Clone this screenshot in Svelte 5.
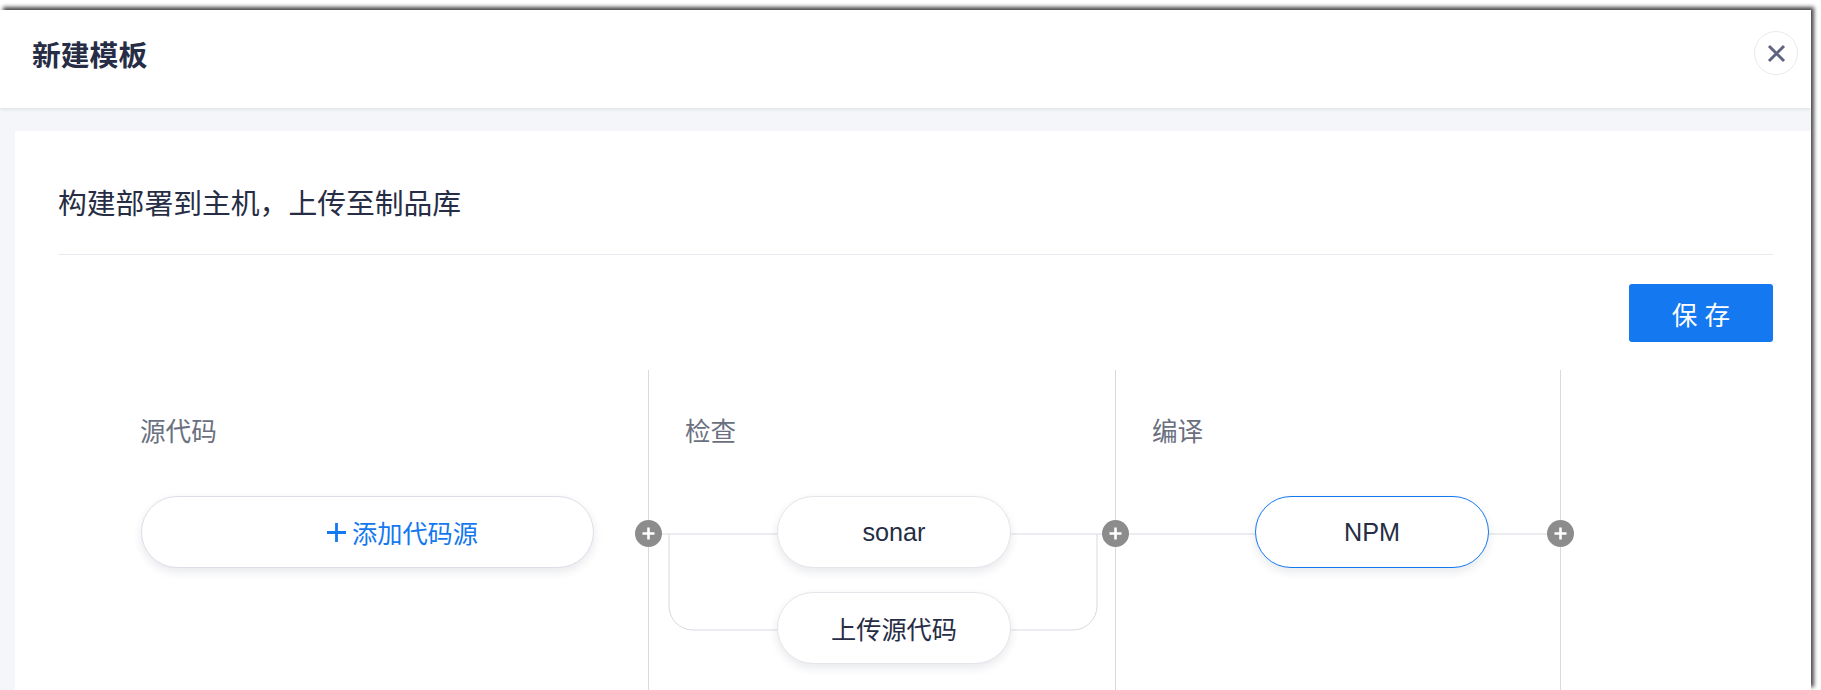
<!--
  New template page: header bar, pipeline card with stage columns and connectors.
-->
<script lang="ts">
	// Stage origin sits at page (58, 370); connector coordinates are relative to it.
	const TOP_Y = 164;
	const LOW_Y = 260;

	const links = [
		`M 590 ${TOP_Y} H 719`,
		`M 952 ${TOP_Y} H 1057`,
		`M 1057 ${TOP_Y} H 1197`,
		`M 1431 ${TOP_Y} H 1502`,
		`M 611 ${TOP_Y} V ${LOW_Y - 24} A 24 24 0 0 0 635 ${LOW_Y} H 719`,
		`M 1039 ${TOP_Y} V ${LOW_Y - 24} A 24 24 0 0 1 1015 ${LOW_Y} H 952`
	];
	const plusAt = [590, 1057, 1502];
</script>

<div class="window">
	<header class="topbar">
		<h1>新建模板</h1>
		<button class="close" aria-label="关闭">
			<svg width="19" height="19" viewBox="0 0 19 19">
				<path d="M2 2 L17 17 M17 2 L2 17" />
			</svg>
		</button>
	</header>

	<main class="page">
		<section class="card">
			<h2>构建部署到主机，上传至制品库</h2>
			<div class="toolbar">
				<button class="save">保 存</button>
			</div>

			<div class="stage">
				<div class="col col-source">
					<div class="label">源代码</div>
					<button class="pill pill-add">
						<svg width="19" height="19" viewBox="0 0 19 19">
							<path d="M9.5 0 V19 M0 9.5 H19" />
						</svg>
						<span>添加代码源</span>
					</button>
				</div>
				<div class="col col-check">
					<div class="label">检查</div>
					<div class="steps">
						<div class="pill">sonar</div>
						<div class="pill">上传源代码</div>
					</div>
				</div>
				<div class="col col-build">
					<div class="label">编译</div>
					<div class="steps">
						<div class="pill active">NPM</div>
					</div>
				</div>

				<svg class="links" width="1600" height="320">
					{#each links as d}
						<path {d} />
					{/each}
				</svg>
				{#each plusAt as x}
					<span class="plus" style="left: {x}px">
						<svg width="15" height="15" viewBox="0 0 15 15">
							<path d="M7.5 1.5 V13.5 M1.5 7.5 H13.5" />
						</svg>
					</span>
				{/each}
			</div>
		</section>
	</main>
</div>

<style>
	:global(body) {
		margin: 0;
		background: #fff;
		overflow: hidden;
	}

	.window {
		width: 1811px;
		height: 680px;
		margin-top: 10px;
		display: flex;
		flex-direction: column;
		background: #fff;
		box-shadow: 3px -3px 4px #4c4c4c;
		font-family: 'Liberation Sans', 'Noto Sans CJK SC', sans-serif;
		color: #262d45;
	}

	.topbar {
		flex: none;
		height: 98px;
		padding: 0 13px 12px 32px;
		box-sizing: border-box;
		display: flex;
		align-items: center;
		justify-content: space-between;
		background: #fff;
		box-shadow: 0 1px 4px rgba(0, 0, 0, 0.1);
		position: relative;
	}

	h1 {
		margin: 0;
		font-size: 28.8px;
		font-weight: 700;
	}

	.close {
		width: 44px;
		height: 44px;
		padding: 0;
		display: flex;
		align-items: center;
		justify-content: center;
		background: #fff;
		border: 1px solid #e8eaf0;
		border-radius: 50%;
	}

	.close path {
		fill: none;
		stroke: #5f6580;
		stroke-width: 3;
	}

	.page {
		flex: 1;
		min-height: 0;
		padding: 23px 0 0 15px;
		background: #f5f6fa;
	}

	.card {
		height: 100%;
		padding: 0 38px 0 43px;
		box-sizing: border-box;
		background: #fff;
		overflow: hidden;
	}

	h2 {
		margin: 0;
		height: 124px;
		line-height: 146px;
		box-sizing: border-box;
		font-size: 28.8px;
		font-weight: 400;
		border-bottom: 1px solid #e9eaf0;
	}

	.toolbar {
		display: flex;
		justify-content: flex-end;
		padding-top: 29px;
	}

	.save {
		width: 144px;
		height: 58px;
		padding: 0;
		border: 0;
		border-radius: 3px;
		background: #1478f0;
		color: #fff;
		font: inherit;
		font-size: 25.6px;
	}

	.stage {
		position: relative;
		display: flex;
		height: 320px;
		margin-top: 28px;
	}

	.col {
		flex: none;
		box-sizing: border-box;
		border-right: 1px solid #d8dae0;
	}

	.col-source {
		width: 591px;
		padding-left: 82px;
	}

	.col-check {
		width: 467px;
		padding-left: 36px;
	}

	.col-build {
		width: 445px;
		padding-left: 36px;
	}

	.label {
		height: 126px;
		line-height: 124px;
		font-size: 25.6px;
		color: #6a7080;
	}

	.steps {
		display: flex;
		flex-direction: column;
		gap: 24px;
		padding-left: 92px;
	}

	.col-build .steps {
		padding-left: 103px;
	}

	.pill {
		position: relative;
		z-index: 1;
		width: 234px;
		height: 72px;
		box-sizing: border-box;
		display: flex;
		align-items: center;
		justify-content: center;
		background: #fff;
		border: 1px solid #e4e5ea;
		border-radius: 36px;
		box-shadow: 0 4px 10px rgba(30, 40, 70, 0.1);
		font-size: 25.2px;
	}

	.pill.active {
		border-color: #1478f0;
	}

	.pill-add {
		width: 453px;
		margin-left: 1px;
		padding: 0 0 0 185px;
		justify-content: flex-start;
		gap: 6px;
		color: #1478f0;
		font-family: inherit;
		border-color: #dcdfe8;
	}

	.pill-add path {
		fill: none;
		stroke: #1478f0;
		stroke-width: 2.8;
	}

	.links {
		position: absolute;
		left: 0;
		top: 0;
		pointer-events: none;
	}

	.links path {
		fill: none;
		stroke: #d8dae0;
		stroke-width: 1;
	}

	.plus {
		position: absolute;
		top: 149.5px;
		z-index: 2;
		width: 27px;
		height: 27px;
		margin-left: -13px;
		display: flex;
		align-items: center;
		justify-content: center;
		border-radius: 50%;
		background: #8c8c8c;
	}

	.plus path {
		fill: none;
		stroke: #fff;
		stroke-width: 2.6;
	}
</style>
